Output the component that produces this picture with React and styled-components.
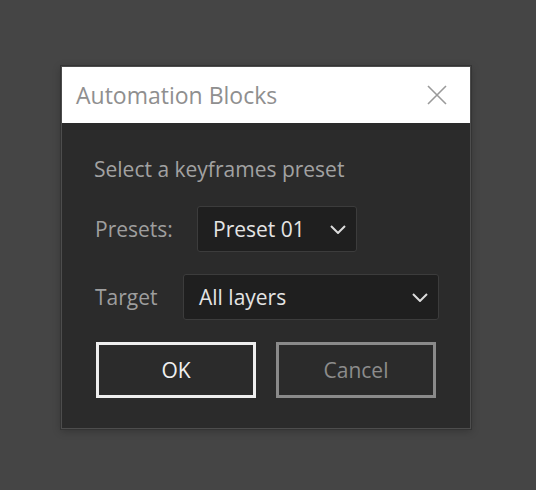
import React from "react";
import styled, { createGlobalStyle } from "styled-components";

const GlobalStyle = createGlobalStyle`
  html, body {
    margin: 0;
    padding: 0;
    background: #454545;
  }
  body {
    font-family: "Open Sans", "Noto Sans", sans-serif;
  }
`;

const Page = styled.div`
  width: 536px;
  height: 490px;
  padding: 66px 0 0 61px;
  box-sizing: border-box;
`;

const Dialog = styled.div`
  width: 408px;
  border: 1px solid #4d4d4d;
  box-shadow: 0 0 0 1px #343434, 0 2px 8px rgba(0, 0, 0, 0.25);
  background: #2b2b2b;
`;

const Header = styled.div`
  height: 56px;
  background: #ffffff;
  display: flex;
  align-items: center;
  justify-content: space-between;
  padding: 0 22px 0 14px;
`;

const Title = styled.h1`
  margin: 0;
  font-family: "Open Sans", sans-serif;
  font-weight: 400;
  font-size: 23px;
  color: #8f8f8f;
`;

const CloseButton = styled.button`
  border: none;
  background: none;
  padding: 0;
  width: 22px;
  height: 22px;
  display: flex;
  align-items: center;
  justify-content: center;
  cursor: pointer;
`;

const Body = styled.div`
  padding: 34px 34px 30px 32px;
`;

const Intro = styled.p`
  margin: 0 0 25px;
  font-size: 21px;
  line-height: 24px;
  color: #a2a2a2;
`;

const Row = styled.div`
  display: flex;
  align-items: center;
  height: 46px;
  margin-bottom: 22px;
`;

const Label = styled.span`
  box-sizing: border-box;
  flex: none;
  font-size: 21px;
  color: #9e9e9e;
  width: ${(p) => p.$width}px;
  padding-left: 1px;
`;

const Select = styled.div`
  box-sizing: border-box;
  flex: none;
  width: ${(p) => p.$width}px;
  height: 46px;
  background: #1f1f1f;
  border: 1px solid #3c3c3c;
  border-radius: 3px;
  display: flex;
  align-items: center;
  justify-content: space-between;
  padding: 0 10px 0 15px;
  font-size: 21px;
  color: #e4e4e4;
`;

const Buttons = styled.div`
  display: flex;
  gap: 20px;
  padding-left: 2px;
`;

const Button = styled.button`
  box-sizing: border-box;
  width: 160px;
  height: 56px;
  background: transparent;
  border: 3px solid ${(p) => (p.$primary ? "#efefef" : "#8a8a8a")};
  color: ${(p) => (p.$primary ? "#f0f0f0" : "#8c8c8c")};
  font-family: "Open Sans", sans-serif;
  font-size: 21px;
  cursor: pointer;
`;

const Chevron = () => (
  <svg width="16" height="9" viewBox="0 0 16 9">
    <path d="M1 1 L8 8 L15 1" fill="none" stroke="#dcdcdc" strokeWidth="2" />
  </svg>
);

const CloseIcon = () => (
  <svg width="20" height="20" viewBox="0 0 20 20">
    <path d="M1 1 L19 19 M19 1 L1 19" stroke="#9a9a9a" strokeWidth="1.6" />
  </svg>
);

const App = () => (
  <Page>
    <GlobalStyle />
    <Dialog>
      <Header>
        <Title>Automation Blocks</Title>
        <CloseButton aria-label="Close">
          <CloseIcon />
        </CloseButton>
      </Header>
      <Body>
        <Intro>Select a keyframes preset</Intro>
        <Row>
          <Label $width={103}>Presets:</Label>
          <Select $width={160}>
            Preset 01
            <Chevron />
          </Select>
        </Row>
        <Row>
          <Label $width={89}>Target</Label>
          <Select $width={256}>
            All layers
            <Chevron />
          </Select>
        </Row>
        <Buttons>
          <Button $primary>OK</Button>
          <Button>Cancel</Button>
        </Buttons>
      </Body>
    </Dialog>
  </Page>
);

export default App;
